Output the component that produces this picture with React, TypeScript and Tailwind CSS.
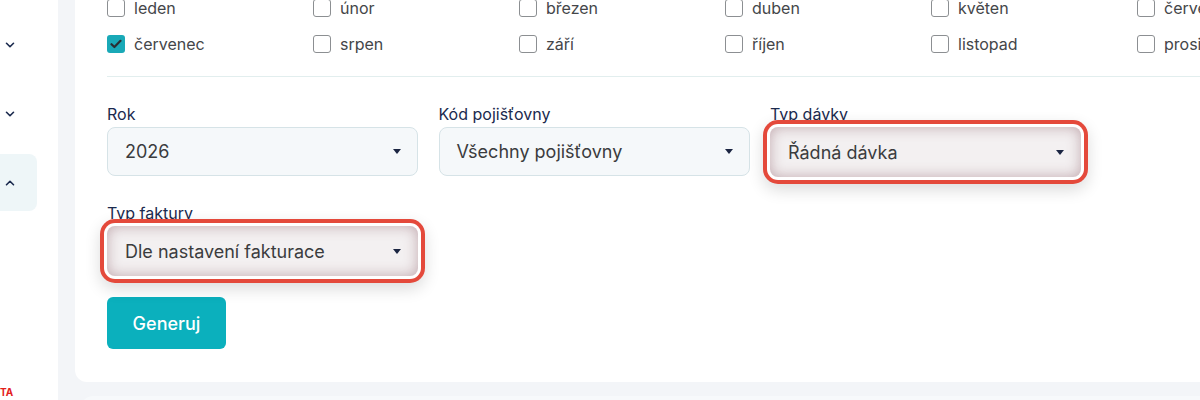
import { ChevronDown, ChevronUp } from 'lucide-react';

const months = [
  ['leden', false],
  ['únor', false],
  ['březen', false],
  ['duben', false],
  ['květen', false],
  ['červen', false],
  ['červenec', true],
  ['srpen', false],
  ['září', false],
  ['říjen', false],
  ['listopad', false],
  ['prosinec', false],
] as const;

function Checkbox({ label, checked }: { label: string; checked: boolean }) {
  return (
    <label className="flex items-center gap-[9px] h-[24px] whitespace-nowrap">
      {checked ? (
        <span className="w-[18px] h-[18px] rounded-[3px] bg-[#19a9b7] flex items-center justify-center shrink-0">
          <svg width="12" height="10" viewBox="0 0 12 10" fill="none">
            <path d="M1.5 5.2 4.4 8 10.5 1.8" stroke="#2b2f33" strokeWidth="2.2" strokeLinecap="round" strokeLinejoin="round" />
          </svg>
        </span>
      ) : (
        <span className="w-[18px] h-[18px] rounded-[3px] border-[1.5px] border-[#8c8f92] bg-white shrink-0" />
      )}
      <span className="text-[16px] text-[#444649]">{label}</span>
    </label>
  );
}

function Caret() {
  return (
    <svg width="8" height="5" viewBox="0 0 8 5" className="shrink-0">
      <path d="M0 0h8L4 5z" fill="#1b2542" />
    </svg>
  );
}

function Select({ label, value, highlight = false }: { label: string; value: string; highlight?: boolean }) {
  return (
    <div className="flex flex-col">
      <span className="text-[16px] leading-[24px] text-[#1b2a4e] translate-y-[2px]">{label}</span>
      <div
        className={
          highlight
            ? 'relative mt-[3px] h-[50px] rounded-[8px] bg-[#f3f0f1] flex items-center justify-between pl-[18px] pr-[17px] shadow-[inset_0_0_14px_rgba(125,70,80,0.42),0_0_0_3px_#ffffff,0_0_0_7px_#e4493b,0_6px_16px_7px_rgba(0,0,0,0.14)]'
            : 'mt-[3px] h-[49px] rounded-[8px] bg-[#f5f8fa] border border-[#d6e3e7] flex items-center justify-between pl-[17px] pr-[16px]'
        }
      >
        <span className="text-[18px] text-[#3b3c3e]">{value}</span>
        <Caret />
      </div>
    </div>
  );
}

export default function App() {
  return (
    <div className="h-[400px] w-[1200px] overflow-hidden flex bg-[#f3f5f8]" style={{ fontFamily: 'Inter, "Noto Sans", sans-serif' }}>
      {/* sidebar */}
      <aside className="w-[58px] shrink-0 bg-white flex flex-col pt-[16px]">
        <div className="flex flex-col gap-[12px]">
          <div className="h-[57px] w-[37px] flex items-center pl-[3px] text-[#1b2a4e]">
            <ChevronDown size={14} strokeWidth={2.75} />
          </div>
          <div className="h-[57px] w-[37px] flex items-center pl-[3px] text-[#1b2a4e]">
            <ChevronDown size={14} strokeWidth={2.75} />
          </div>
          <div className="h-[57px] w-[37px] flex items-center pl-[3px] rounded-r-[8px] bg-[#eef6f8] text-[#1b2a4e]">
            <ChevronUp size={14} strokeWidth={2.75} />
          </div>
        </div>
        <span className="mt-auto mb-[2px] text-[10px] leading-[12px] font-bold text-[#e3201b]">TA</span>
      </aside>

      {/* main */}
      <main className="flex-1 overflow-hidden pl-[17px]">
        <section className="w-[1300px] -mt-[30px] pt-[26px] pb-[33px] pl-[32px] bg-white rounded-[12px]">
          <div className="grid grid-cols-[repeat(6,206px)] gap-y-[12px]">
            {months.map(([m, c]) => (
              <Checkbox key={m} label={m} checked={c} />
            ))}
          </div>

          <div className="mt-[20px] h-px bg-[#e2eeee]" />

          <div className="mt-[23px] grid grid-cols-[repeat(3,311px)] gap-x-[20.5px] gap-y-[22px]">
            <Select label="Rok" value="2026" />
            <Select label="Kód pojišťovny" value="Všechny pojišťovny" />
            <Select label="Typ dávky" value="Řádná dávka" highlight />
            <Select label="Typ faktury" value="Dle nastavení fakturace" highlight />
          </div>

          <button className="mt-[21px] h-[52px] w-[119px] rounded-[6px] bg-[#0bb0bd] text-white text-[18px] font-medium">
            Generuj
          </button>
        </section>

        <section className="mt-[14px] w-[1300px] ml-[6px] h-[60px] bg-[#f7f9fb] rounded-[12px]" />
      </main>
    </div>
  );
}
